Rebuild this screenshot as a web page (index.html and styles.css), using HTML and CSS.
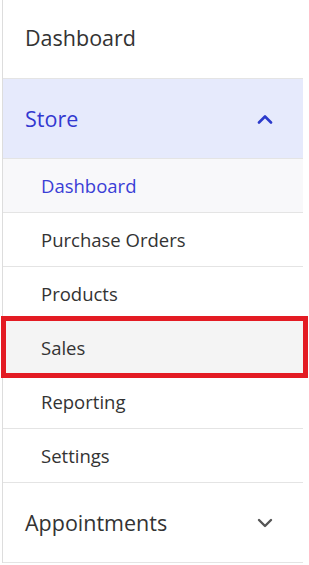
FILE: index.html
```html
<!DOCTYPE html>
<html lang="en">
<head>
    <meta charset="UTF-8">
    <meta name="viewport" content="width=device-width, initial-scale=1.0">
    <title>Menu</title>
    <link rel="stylesheet" href="styles.css">
</head>
<body>

    <!-- Menu lateral -->
    <nav class="sidenav">
        <a class="nav-item first" href="#">Dashboard</a>

        <div class="nav-group open">
            <a class="nav-item group-head" href="#">
                <span>Store</span>
                <svg class="chevron" width="16" height="10" viewBox="0 0 16 10">
                    <polyline points="2,8.5 8,2.5 14,8.5" fill="none" stroke="currentColor" stroke-width="2.6" stroke-linecap="round" stroke-linejoin="round"/>
                </svg>
            </a>
            <ul class="sub-list">
                <li><a class="sub-item active" href="#">Dashboard</a></li>
                <li><a class="sub-item" href="#">Purchase Orders</a></li>
                <li><a class="sub-item" href="#">Products</a></li>
                <li><a class="sub-item highlight" href="#">Sales</a></li>
                <li><a class="sub-item" href="#">Reporting</a></li>
                <li><a class="sub-item" href="#">Settings</a></li>
            </ul>
        </div>

        <div class="nav-group">
            <a class="nav-item group-head" href="#">
                <span>Appointments</span>
                <svg class="chevron" width="16" height="10" viewBox="0 0 16 10">
                    <polyline points="2,2 8,8 14,2" fill="none" stroke="currentColor" stroke-width="2.4" stroke-linecap="round" stroke-linejoin="round"/>
                </svg>
            </a>
        </div>
    </nav>

</body>
</html>
```

FILE: styles.css
```css
body {
    margin: 0;
    padding: 0;
    background: #ffffff;
    font-family: "Open Sans", Arial, sans-serif;
    color: #333333;
}

.sidenav {
    width: 300px;
    margin-left: 2px;
    border-left: 1px solid #dddddd;
    display: flex;
    flex-direction: column;
}

a {
    text-decoration: none;
    color: inherit;
}

.nav-item {
    display: flex;
    align-items: center;
    justify-content: space-between;
    box-sizing: border-box;
    height: 80px;
    padding: 0 30px 0 22px;
    font-size: 21.5px;
    color: #333333;
    border-bottom: 1px solid #e4e4e4;
}

.nav-item.first {
    height: 79px;
    padding-bottom: 3px;
}

.nav-group.open .group-head {
    background: #e6eafc;
    color: #3338d0;
}

.nav-group.open .chevron {
    color: #2b3acb;
}

.chevron {
    color: #555555;
}

.sub-list {
    list-style: none;
    margin: 0;
    padding: 0;
}

.sub-item {
    display: flex;
    align-items: center;
    height: 53px;
    padding-left: 38px;
    font-size: 18.5px;
    color: #333333;
    border-bottom: 1px solid #e4e4e4;
}

.sub-item.active {
    background: #f8f8fa;
    color: #3a3ed6;
}

.sub-item.highlight {
    position: relative;
    background: #f4f4f4;
}

/* marcação vermelha */
.sub-item.highlight::after {
    content: "";
    position: absolute;
    top: -5px;
    bottom: -4px;
    left: -2px;
    right: -5px;
    border: 5px solid #e31b23;
}
```
